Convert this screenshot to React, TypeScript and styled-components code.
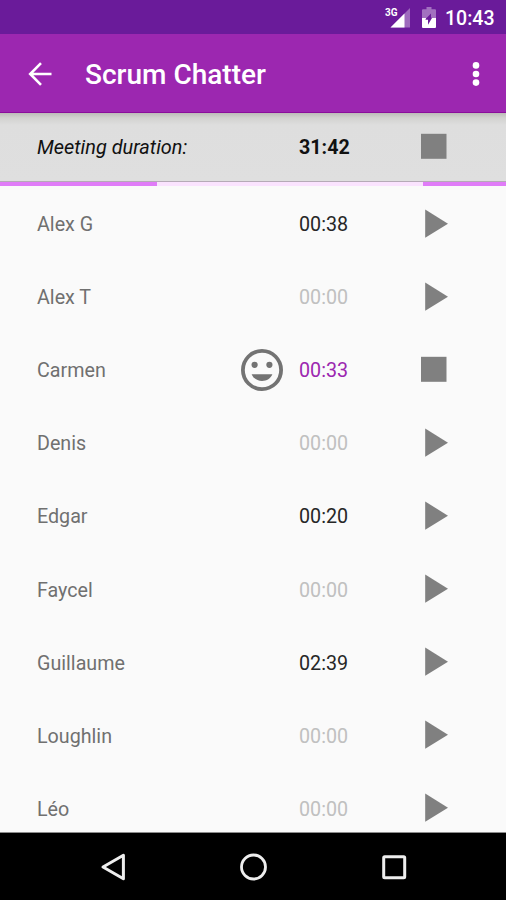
import React from 'react';
import styled, { createGlobalStyle } from 'styled-components';

const GlobalStyle = createGlobalStyle`
  * { box-sizing: border-box; }
  body { margin: 0; background: #fafafa; }
`;

const Screen = styled.div`
  width: 506px;
  height: 900px;
  display: flex;
  flex-direction: column;
  overflow: hidden;
  background: #fafafa;
  font-family: Roboto, "Liberation Sans", sans-serif;
  font-size: 19.7px;
  svg { display: block; flex: none; }
`;

const StatusBar = styled.div`
  flex: none;
  height: 34px;
  padding: 2px 11px 0 0;
  display: flex;
  align-items: center;
  justify-content: flex-end;
  background: #6a1b9a;
  color: #fff;
`;

const Clock = styled.span`
  margin-left: 9px;
  width: 50px;
  font-size: 19.5px;
  font-weight: 500;
  white-space: nowrap;
`;

const Toolbar = styled.header`
  flex: none;
  height: 79px;
  padding: 1px 26px 0 28px;
  display: flex;
  align-items: center;
  background: #9c27b0;
  border-bottom: 1px solid #8b0d9c;
  color: #fff;
`;

const Title = styled.h1`
  flex: 1;
  margin: 2px 0 0 33px;
  font-size: 28px;
  line-height: 36px;
  font-weight: 500;
`;

const Line = styled.div`
  display: grid;
  grid-template-columns: 204px 42px 16px 122px auto;
  align-items: center;
  padding-left: 37px;
  line-height: 24px;
`;

const MeetingLine = styled(Line)`
  flex: none;
  height: 69px;
  padding-bottom: 1px;
  border-bottom: 1px solid #b5aab7;
  background: linear-gradient(#bcbcb8 0, #d2d2d0 5px, #dedede 12px, #dfdfdf 100%);
`;

const MeetingLabel = styled.span`
  padding-top: 2px;
  font-style: italic;
  font-size: 19.9px;
  color: #111;
`;

const MeetingTime = styled.span`
  grid-column: 4;
  padding-top: 2px;
  font-weight: 700;
  color: #111;
`;

const Progress = styled.div`
  flex: none;
  height: 4px;
  display: grid;
  grid-template-columns: 157px 266px 1fr;
`;

const Segment = styled.div<{ $active?: boolean }>`
  background: ${(p) => (p.$active ? '#e07cf8' : '#fae3fe')};
`;

const List = styled.main`
  flex: 1;
  min-height: 0;
  overflow: hidden;
  padding-top: 1px;
  border-bottom: 1px solid #8c8c8c;
`;

const MemberRow = styled(Line)`
  height: 73.1px;
`;

const Name = styled.span`
  padding-top: 3px;
  color: #707070;
`;

type TimeState = 'idle' | 'spoken' | 'talking';

const timeColors: Record<TimeState, string> = {
  idle: '#c0c0c0',
  spoken: '#262626',
  talking: '#9c27b0',
};

const Time = styled.span<{ $state: TimeState }>`
  grid-column: 4;
  padding-top: 3px;
  color: ${(p) => timeColors[p.$state]};
`;

const NavBar = styled.nav`
  flex: none;
  height: 67px;
  display: flex;
  align-items: center;
  justify-content: space-between;
  padding: 0 98px 0 99px;
  background: #000;
`;

const StopIcon = () => (
  <svg width="28" height="30" viewBox="0 0 28 30">
    <rect x="0" y="1.8" width="25.5" height="25" fill="#808080" />
  </svg>
);

const PlayIcon = () => (
  <svg width="28" height="30" viewBox="0 0 28 30">
    <path d="M4.2 .5 27 14.700 4.2 28.700z" fill="#808080" />
  </svg>
);

const SmileyIcon = () => (
  <svg width="42" height="42" viewBox="0 0 42 42" fill="#737373">
    <circle cx="21" cy="21" r="19.1" fill="none" stroke="#737373" strokeWidth="3.8" />
    <circle cx="13.6" cy="15.8" r="3.1" />
    <circle cx="28.4" cy="15.8" r="3.1" />
    <path d="M10.6 25.3h20.8c-1.8 4.1-5.6 6.7-10.4 6.7s-8.6-2.6-10.4-6.7z" />
  </svg>
);

const BackArrow = () => (
  <svg width="24" height="24" viewBox="0 0 24 24" fill="none" stroke="#fff" strokeWidth="2.6">
    <path d="M23.5 12H3M13 1.2 2.2 12 13 22.8" />
  </svg>
);

const OverflowIcon = () => (
  <svg width="8" height="26" viewBox="0 0 8 26" fill="#fff">
    <circle cx="4" cy="4.4" r="3.3" />
    <circle cx="4" cy="13" r="3.3" />
    <circle cx="4" cy="21.6" r="3.3" />
  </svg>
);

const SignalText = styled.text`
  font: 700 10px Roboto, sans-serif;
`;

const SignalIcon = () => (
  <svg width="26" height="24" viewBox="0 0 26 24" fill="#fff">
    <path d="M25 2V21.5H5.5z" opacity=".35" />
    <path d="M19.5 7.5v14h-14z" />
    <SignalText x="0" y="9.5" textLength="12.5">3G</SignalText>
  </svg>
);

const BatteryIcon = () => (
  <svg width="14" height="22" viewBox="0 0 14 22" fill="#fff">
    <path d="M4.5 0h5v2.2H13a1 1 0 0 1 1 1V11H10.500L9 10.500V6.5L4.500 11H0V3.200a1 1 0 0 1 1-1h3.500z" opacity=".38" />
    <path d="M0 11h4.200l-.8 1.800H6v5L10 11h4v9a1 1 0 0 1-1 1H1a1 1 0 0 1-1-1z" />
  </svg>
);

const StatusIcons = styled.div`
  display: flex;
  align-items: center;
  gap: 11px;
`;

interface Member {
  name: string;
  time: string;
  state: TimeState;
}

const members: Member[] = [
  { name: 'Alex G', time: '00:38', state: 'spoken' },
  { name: 'Alex T', time: '00:00', state: 'idle' },
  { name: 'Carmen', time: '00:33', state: 'talking' },
  { name: 'Denis', time: '00:00', state: 'idle' },
  { name: 'Edgar', time: '00:20', state: 'spoken' },
  { name: 'Faycel', time: '00:00', state: 'idle' },
  { name: 'Guillaume', time: '02:39', state: 'spoken' },
  { name: 'Loughlin', time: '00:00', state: 'idle' },
  { name: 'Léo', time: '00:00', state: 'idle' },
];

export default function App() {
  return (
    <Screen>
      <GlobalStyle />
      <StatusBar>
        <StatusIcons>
          <SignalIcon />
          <BatteryIcon />
        </StatusIcons>
        <Clock>10:43</Clock>
      </StatusBar>
      <Toolbar>
        <BackArrow />
        <Title>Scrum Chatter</Title>
        <OverflowIcon />
      </Toolbar>
      <MeetingLine>
        <MeetingLabel>Meeting duration:</MeetingLabel>
        <MeetingTime>31:42</MeetingTime>
        <StopIcon />
      </MeetingLine>
      <Progress>
        <Segment $active />
        <Segment />
        <Segment $active />
      </Progress>
      <List>
        {members.map((m) => (
          <MemberRow key={m.name}>
            <Name>{m.name}</Name>
            {m.state === 'talking' && <SmileyIcon />}
            <Time $state={m.state}>{m.time}</Time>
            {m.state === 'talking' ? <StopIcon /> : <PlayIcon />}
          </MemberRow>
        ))}
      </List>
      <NavBar>
        <svg width="30" height="30" viewBox="0 0 30 30" fill="none" stroke="#eee" strokeWidth="3" strokeLinejoin="round">
          <path d="M24.400 3.300v23.400L4 15z" />
        </svg>
        <svg width="30" height="30" viewBox="0 0 30 30" fill="none" stroke="#eee" strokeWidth="2.800">
          <circle cx="14.500" cy="15" r="12" />
        </svg>
        <svg width="30" height="30" viewBox="0 0 30 30" fill="none" stroke="#eee" strokeWidth="3">
          <rect x="5.700" y="4.800" width="21" height="21" rx="1" />
        </svg>
      </NavBar>
    </Screen>
  );
}
